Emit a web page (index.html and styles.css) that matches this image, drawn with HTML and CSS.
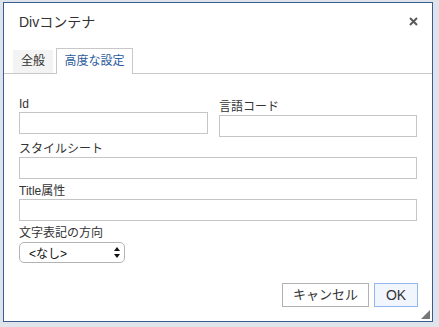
FILE: index.html
```html
<!DOCTYPE html>
<html lang="ja">
<head>
<meta charset="utf-8">
<title>Divコンテナ</title>
<link rel="stylesheet" href="styles.css">
</head>
<body>
<div class="dialog">
  <div class="head">
    <span class="title">Divコンテナ</span>
    <span class="close" aria-label="閉じる"><svg width="9" height="9" viewBox="0 0 9 9"><path d="M1 1 L8 8 M8 1 L1 8" stroke="#5a5a5a" stroke-width="2" fill="none"/></svg></span>
  </div>
  <div class="tabs">
    <div class="tab">全般</div>
    <div class="tab active">高度な設定</div>
  </div>
  <div class="body">
    <div class="row pair">
      <div class="field">
        <label class="label">Id</label>
        <div class="input"></div>
      </div>
      <div class="field shifted">
        <label class="label">言語コード</label>
        <div class="input"></div>
      </div>
    </div>
    <div class="row">
      <div class="field">
        <label class="label">スタイルシート</label>
        <div class="input"></div>
      </div>
    </div>
    <div class="row">
      <div class="field">
        <label class="label">Title属性</label>
        <div class="input"></div>
      </div>
    </div>
    <div class="row">
      <div class="field">
        <label class="label">文字表記の方向</label>
        <div class="select">
          <span>&lt;なし&gt;</span>
          <svg width="6" height="11" viewBox="0 0 6 11"><path d="M3 0 L6 4 L0 4 Z M3 11 L6 7 L0 7 Z" fill="#111"/></svg>
        </div>
      </div>
    </div>
  </div>
  <div class="foot">
    <div class="btn">キャンセル</div>
    <div class="btn ok">OK</div>
  </div>
  <div class="grip"></div>
</div>
</body>
</html>
```

FILE: styles.css
```css
* { box-sizing: border-box; }
html, body { margin: 0; padding: 0; }
body {
  background: #dfe4eb;
  font-family: "Liberation Sans", "Noto Sans CJK JP", sans-serif;
  color: #333;
  width: 439px;
  height: 327px;
  overflow: hidden;
}
.dialog {
  position: relative;
  margin: 2px 0 0 3px;
  width: 430px;
  height: 320px;
  background: #fff;
  border: 1px solid #3b5c93;
  display: flex;
  flex-direction: column;
}
.head {
  height: 45px;
  padding: 9px 14px 0 15px;
  display: flex;
  justify-content: space-between;
  align-items: flex-start;
}
.title {
  font-size: 14px;
  line-height: 20px;
  color: #333;
}
.close {
  display: flex;
  margin-top: 5px;
}
.tabs {
  height: 26px;
  display: flex;
  align-items: flex-end;
  gap: 3px;
  padding-left: 9px;
  border-bottom: 1px solid #c8c8c8;
}
.tab {
  height: 23px;
  width: 40px;
  background: #f3f3f3;
  font-size: 12px;
  line-height: 23px;
  text-align: center;
  color: #333;
}
.tab.active {
  height: 26px;
  width: 77px;
  margin-bottom: -1px;
  background: #fff;
  border: 1px solid #c8c8c8;
  border-bottom: none;
  color: #2b5b9c;
  line-height: 24px;
}
.body {
  flex: 1;
  padding: 22px 15px 0 15px;
  display: flex;
  flex-direction: column;
  gap: 4px;
}
.row.pair {
  display: grid;
  grid-template-columns: 189px 1fr;
  column-gap: 11px;
}
.field {
  display: flex;
  flex-direction: column;
}
.field.shifted { padding-top: 3px; }
.label {
  font-size: 12px;
  line-height: 16px;
  height: 16px;
  color: #333;
}
.input {
  height: 22px;
  border: 1px solid #c5c5c5;
  background: #fff;
}
.select {
  margin-top: 1px;
  width: 106px;
  height: 21px;
  border: 1px solid #b3b3b3;
  border-radius: 5px;
  display: flex;
  align-items: center;
  justify-content: space-between;
  padding: 0 4px 0 9px;
  font-size: 12px;
  color: #111;
}
.foot {
  display: flex;
  justify-content: flex-end;
  gap: 5px;
  padding: 0 14px 14px 0;
}
.btn {
  height: 24px;
  width: 87px;
  border: 1px solid #b1b1b1;
  background: #fff;
  font-size: 13px;
  line-height: 22px;
  text-align: center;
  color: #333;
}
.btn.ok {
  width: 44px;
  border-color: #91b8ee;
  background: #f1f6fe;
  font-size: 14px;
}
.grip {
  position: absolute;
  right: 2px;
  bottom: 2px;
  width: 0;
  height: 0;
  border-left: 9px solid transparent;
  border-bottom: 9px solid #777;
}
```
